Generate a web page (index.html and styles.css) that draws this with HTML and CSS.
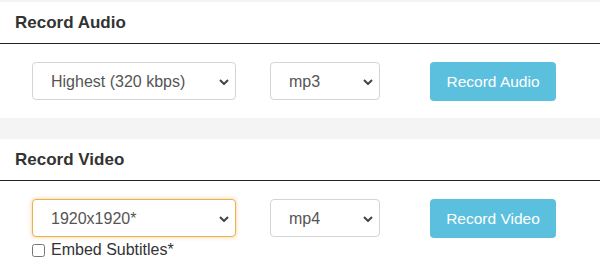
FILE: index.html
```html
<!DOCTYPE html>
<html lang="en">
<head>
    <meta charset="UTF-8">
    <meta name="viewport" content="width=device-width, initial-scale=1.0">
    <title>Record</title>
    <link rel="stylesheet" href="styles.css">
</head>
<body>
    <div class="page">
        <section class="panel">
            <h2 class="panel-title">Record Audio</h2>
            <div class="panel-body">
                <div class="controls">
                    <span class="select-wrap quality">
                        <select>
                            <option>Highest (320 kbps)</option>
                            <option>High (256 kbps)</option>
                            <option>Medium (192 kbps)</option>
                        </select>
                        <svg class="chevron" viewBox="0 0 10 6"><path d="M1 1 L5 5 L9 1" /></svg>
                    </span>
                    <span class="select-wrap format">
                        <select>
                            <option>mp3</option>
                            <option>m4a</option>
                        </select>
                        <svg class="chevron" viewBox="0 0 10 6"><path d="M1 1 L5 5 L9 1" /></svg>
                    </span>
                    <button class="btn-record">Record Audio</button>
                </div>
            </div>
        </section>
        <section class="panel">
            <h2 class="panel-title">Record Video</h2>
            <div class="panel-body">
                <div class="controls">
                    <div class="quality-col">
                        <span class="select-wrap quality">
                            <select class="focused">
                                <option>1920x1920*</option>
                                <option>1280x720</option>
                            </select>
                            <svg class="chevron" viewBox="0 0 10 6"><path d="M1 1 L5 5 L9 1" /></svg>
                        </span>
                        <label class="check">
                            <input type="checkbox">
                            <span>Embed Subtitles*</span>
                        </label>
                    </div>
                    <span class="select-wrap format">
                        <select>
                            <option>mp4</option>
                            <option>webm</option>
                        </select>
                        <svg class="chevron" viewBox="0 0 10 6"><path d="M1 1 L5 5 L9 1" /></svg>
                    </span>
                    <button class="btn-record">Record Video</button>
                </div>
            </div>
        </section>
    </div>
</body>
</html>
```

FILE: styles.css
```css
body {
    font-family: "Liberation Sans", Arial, sans-serif;
    color: #333333;
    margin: 0;
    background-color: #f4f4f4;
}
.page {
    padding-top: 2px;
}
.panel {
    background-color: #ffffff;
}
.panel + .panel {
    margin-top: 21px;
}
.panel-title {
    margin: 0;
    padding: 10px 15px;
    font-size: 17px;
    line-height: 21px;
    font-weight: bold;
    color: #333333;
    border-bottom: 1px solid #222222;
}
.panel-body {
    padding: 18px 0 17px 32px;
}
.controls {
    display: flex;
    align-items: flex-start;
}
.quality-col {
    display: flex;
    flex-direction: column;
    margin-right: 34px;
}
.select-wrap {
    position: relative;
    display: block;
}
.controls > .select-wrap.quality {
    margin-right: 34px;
}
.select-wrap.format {
    margin-right: 50px;
}
.select-wrap select {
    appearance: none;
    -webkit-appearance: none;
    display: block;
    height: 38px;
    margin: 0;
    padding: 0 0 0 18px;
    font-family: inherit;
    font-size: 16px;
    color: #555555;
    background-color: #ffffff;
    border: 1px solid #d4d4d4;
    border-radius: 4px;
    outline: none;
}
.quality select {
    width: 204px;
}
.format select {
    width: 110px;
}
.select-wrap select.focused {
    border-color: #eeb04f;
    box-shadow: 0 0 4px rgba(240, 173, 78, 0.6);
}
.chevron {
    position: absolute;
    right: 7px;
    top: 17px;
    width: 10px;
    height: 6px;
    fill: none;
    stroke: #444444;
    stroke-width: 2;
    pointer-events: none;
}
.btn-record {
    width: 126px;
    height: 39px;
    padding: 0;
    font-family: inherit;
    font-size: 15.5px;
    color: #ffffff;
    background-color: #5bc0de;
    border: none;
    border-radius: 4px;
    cursor: pointer;
}
.check {
    display: flex;
    align-items: center;
    margin-top: 6px;
    font-size: 16px;
    line-height: 14px;
    color: #333333;
}
.check input {
    width: 13px;
    height: 13px;
    margin: 0 6px 0 0;
}
```
